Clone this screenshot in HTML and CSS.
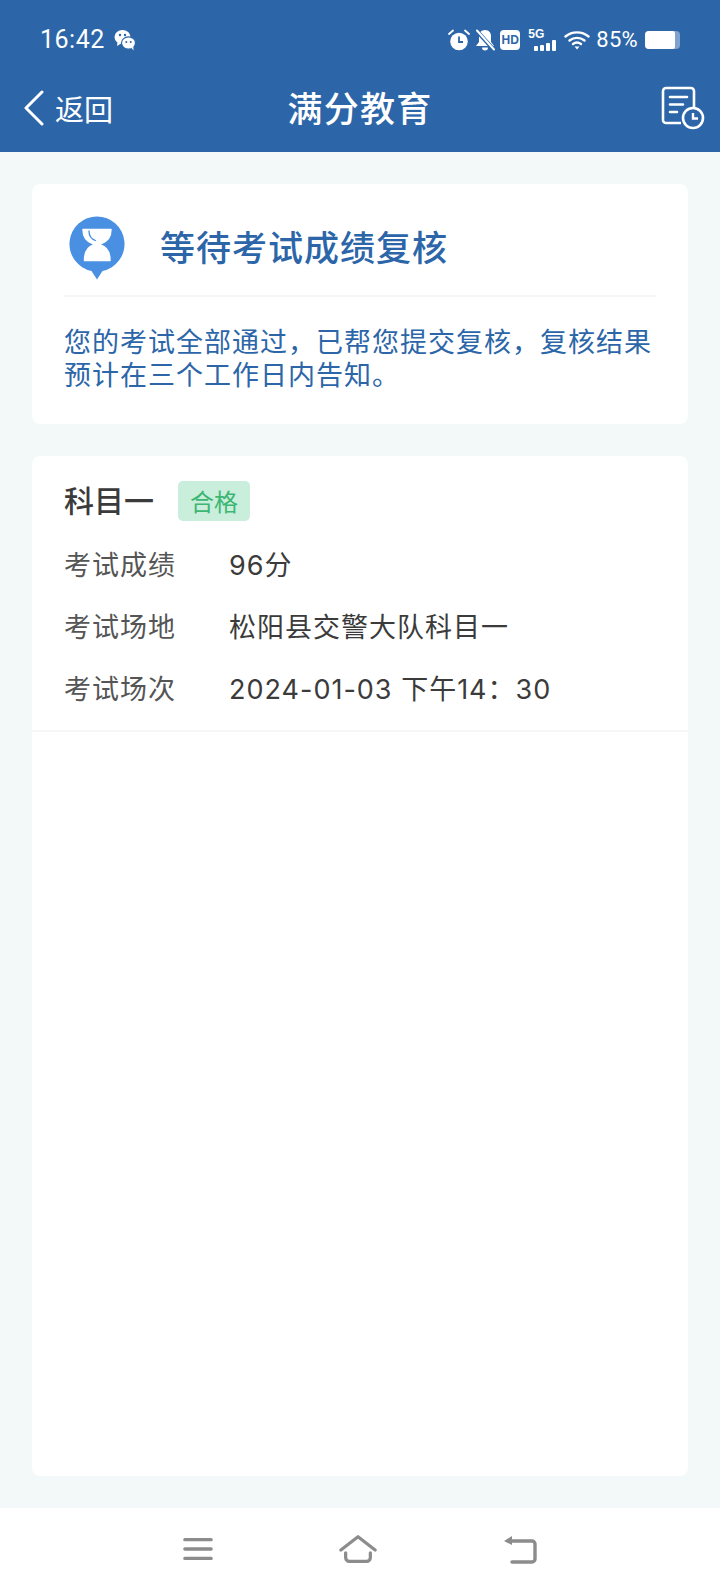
FILE: index.html
```html
<!DOCTYPE html>
<html lang="zh-CN">
<head>
    <meta charset="UTF-8">
    <meta name="viewport" content="width=device-width, initial-scale=1.0">
    <title>满分教育</title>
    <link rel="stylesheet" href="styles.css">
</head>
<body>
    <div class="page">
        <header class="top">
            <div class="status">
                <div class="status-left">
                    <span class="time">16:42</span>
                    <svg class="wechat" viewBox="0 0 22 22" width="22" height="22">
                        <ellipse cx="8.5" cy="8" rx="8" ry="7" fill="#fff"/>
                        <path d="M3.5 13l-.5 4 4-2.5z" fill="#fff"/>
                        <circle cx="6" cy="6" r="1.2" fill="#2c66a9"/>
                        <circle cx="11" cy="6" r="1.2" fill="#2c66a9"/>
                        <ellipse cx="14.5" cy="14" rx="7" ry="6.2" fill="#fff" stroke="#2c66a9" stroke-width="1.2"/>
                        <path d="M17.5 19l2 2.5-.2-4z" fill="#fff"/>
                        <circle cx="12.3" cy="13" r="1" fill="#2c66a9"/>
                        <circle cx="16.7" cy="13" r="1" fill="#2c66a9"/>
                    </svg>
                </div>
                <div class="status-right">
                    <svg viewBox="0 0 22 22" width="22" height="22">
                        <circle cx="11" cy="12.5" r="8.8" fill="#fff"/>
                        <path d="M11 7.5v5.5h4" fill="none" stroke="#2c66a9" stroke-width="1.8"/>
                        <path d="M1 5l4-3.5M21 5l-4-3.5" stroke="#fff" stroke-width="1.8" stroke-linecap="round"/>
                    </svg>
                    <svg viewBox="0 0 20 22" width="20" height="22">
                        <path d="M10 1c4 0 6 3 6 6v6l3 4H1l3-4V7c0-3 2-6 6-6z" fill="#fff"/>
                        <path d="M7 18.500h6c0 2-1 3-3 3s-3-1-3-3z" fill="#fff"/>
                        <path d="M1 1l18 20" stroke="#2c66a9" stroke-width="4"/>
                        <path d="M2 1.500l17 19" stroke="#fff" stroke-width="2" stroke-linecap="round"/>
                    </svg>
                    <span class="hd">HD</span>
                    <span class="signal">
                        <span class="net">5G</span>
                        <span class="bars"><i class="b1"></i><i class="b2"></i><i class="b3"></i><i class="b4"></i></span>
                    </span>
                    <svg viewBox="0 0 26 20" width="26" height="20">
                        <path d="M1.500 6.500C8 1 18 1 24.500 6.500" fill="none" stroke="#fff" stroke-width="2.400" stroke-linecap="round"/>
                        <path d="M5.500 10.500c4.500-3.500 10.500-3.500 15 0" fill="none" stroke="#fff" stroke-width="2.400" stroke-linecap="round"/>
                        <path d="M9 14c2.500-1.800 5.500-1.800 8 0" fill="none" stroke="#fff" stroke-width="2.400" stroke-linecap="round"/>
                        <path d="M10.500 16.500h5L13 19.500z" fill="#fff"/>
                    </svg>
                    <span class="percent">85%</span>
                    <span class="battery"><i></i></span>
                </div>
            </div>
            <nav class="bar">
                <a class="back">
                    <svg viewBox="0 0 22 36" width="22" height="36">
                        <path d="M19 2L3 18l16 16" fill="none" stroke="#fff" stroke-width="3" stroke-linecap="round" stroke-linejoin="round"/>
                    </svg>
                    <span>返回</span>
                </a>
                <h1>满分教育</h1>
                <svg class="record" viewBox="0 0 44 44" width="44" height="44">
                    <path d="M20 37H5a3 3 0 0 1-3-3V5a3 3 0 0 1 3-3h25a3 3 0 0 1 3 3v18" fill="none" stroke="#fff" stroke-width="2.600"/>
                    <path d="M9 11h17M9 18.500h13M9 26h7" stroke="#fff" stroke-width="2.600" stroke-linecap="round"/>
                    <circle cx="32" cy="32" r="10" fill="#2c66a9" stroke="#fff" stroke-width="2.600"/>
                    <path d="M32 27v5.500h5" fill="none" stroke="#fff" stroke-width="2.400"/>
                </svg>
            </nav>
        </header>

        <main class="content">
            <section class="card notice">
                <div class="notice-head">
                    <svg class="hourglass" viewBox="0 0 56 64" width="56" height="64">
                        <path d="M28 0.500a27.500 27.500 0 0 1 5.500 54.450L28 63.500l-5.500-8.550A27.500 27.500 0 0 1 28 0.500z" fill="#4a90e2"/>
                        <path d="M14 13.500h28c0 7.500-3 12-10.500 14.500v1c6.500 2 9.500 7.500 9.500 15.500H15.500c0-8 3-13.500 9-15.500v-1C17 25.500 14 21 14 13.500z" fill="#fff" stroke="#fff" stroke-width="1.500" stroke-linejoin="round"/>
                        <path d="M20 15c0 5 2 8 6.500 9.500" fill="none" stroke="#4a90e2" stroke-width="1.300" stroke-linecap="round"/>
                    </svg>
                    <h2>等待考试成绩复核</h2>
                </div>
                <p>您的考试全部通过，已帮您提交复核，复核结果预计在三个工作日内告知。</p>
            </section>

            <section class="card detail">
                <div class="subject">
                    <div class="subject-title">
                        <span class="subject-name">科目一</span>
                        <span class="tag">合格</span>
                    </div>
                    <div class="row"><span class="label">考试成绩</span><span>96分</span></div>
                    <div class="row"><span class="label">考试场地</span><span>松阳县交警大队科目一</span></div>
                    <div class="row"><span class="label">考试场次</span><span>2024-01-03 下午14：30</span></div>
                </div>
            </section>
        </main>

        <footer class="keys">
            <svg viewBox="0 0 32 26" width="30" height="26">
                <path d="M2 3h28M2 13h28M2 23h28" stroke="#8c8c8c" stroke-width="3.600" stroke-linecap="round"/>
            </svg>
            <svg viewBox="0 0 40 30" width="38" height="30">
                <path d="M2 16L20 2l18 14" fill="none" stroke="#8c8c8c" stroke-width="3.400" stroke-linecap="round" stroke-linejoin="round"/>
                <path d="M7 19v5a4 4 0 0 0 4 4h18a4 4 0 0 0 4-4v-5" fill="none" stroke="#8c8c8c" stroke-width="3.400" stroke-linecap="round"/>
            </svg>
            <svg viewBox="0 0 34 30" width="34" height="30">
                <path d="M5 7h24a3 3 0 0 1 3 3v15a3 3 0 0 1-3 3H9" fill="none" stroke="#8c8c8c" stroke-width="3.400" stroke-linecap="round"/>
                <path d="M1 7l8-5v9z" fill="#8c8c8c"/>
            </svg>
        </footer>
    </div>
</body>
</html>
```

FILE: styles.css
```css
* {
    box-sizing: border-box;
}

body {
    margin: 0;
    font-family: "Noto Sans", "Noto Sans CJK SC", sans-serif;
    color: #3b3b3b;
}

.page {
    display: flex;
    flex-direction: column;
    height: 1592px;
    background-color: #f3f8f9;
}

.top {
    height: 152px;
    background-color: #2c66a9;
    color: #fff;
}

.status {
    display: flex;
    justify-content: space-between;
    align-items: center;
    height: 80px;
    padding: 0 40px 1px 40px;
}

.status-left,
.status-right {
    display: flex;
    align-items: center;
}

.status-left {
    gap: 9px;
}

.status-right {
    gap: 6px;
}

.status-right svg:first-child {
    margin-right: -1px;
}

.time {
    font-family: Roboto, sans-serif;
    font-size: 25px;
    letter-spacing: 0.5px;
}

.hd {
    width: 20px;
    height: 20px;
    margin-left: -1px;
    border-radius: 4px;
    background-color: #fff;
    color: #2c66a9;
    font: 700 12px/20px "Liberation Sans", sans-serif;
    text-align: center;
}

.signal {
    position: relative;
    width: 30px;
    height: 22px;
    margin-left: 2px;
}

.net {
    position: absolute;
    left: 0;
    top: -2px;
    font: 700 12px/14px "Liberation Sans", sans-serif;
}

.bars {
    position: absolute;
    left: 6px;
    bottom: 0;
    display: flex;
    align-items: flex-end;
    gap: 2.500px;
}

.bars i {
    display: block;
    width: 3.500px;
    background-color: #fff;
    border-radius: 1px;
}

.b1 { height: 5px; }
.b2 { height: 6px; }
.b3 { height: 8px; }
.b4 { height: 11px; }

.percent {
    font-family: Roboto, sans-serif;
    font-size: 22px;
    letter-spacing: 0.3px;
}

.battery {
    display: block;
    width: 35px;
    height: 18px;
    margin-left: 1px;
    border-radius: 4px;
    background-color: #7fa3cc;
}

.battery i {
    display: block;
    width: 30px;
    height: 18px;
    border-radius: 4px 2px 2px 4px;
    background-color: #fff;
}

.bar {
    position: relative;
    display: flex;
    justify-content: space-between;
    align-items: center;
    height: 72px;
    padding: 0 15px 16px 23px;
}

.back {
    display: flex;
    align-items: center;
    gap: 10px;
    font-size: 29px;
}

.bar h1 {
    position: absolute;
    left: 0;
    right: 0;
    top: 4px;
    margin: 0;
    font-size: 35px;
    font-weight: 500;
    line-height: 50px;
    letter-spacing: 1.300px;
    text-align: center;
}

.content {
    flex: 1;
    display: flex;
    flex-direction: column;
    gap: 32px;
    padding: 32px 32px;
}

.card {
    border-radius: 8px;
    background-color: #fff;
}

.notice {
    height: 240px;
    padding: 0 32px;
}

.notice-head {
    display: flex;
    align-items: center;
    gap: 35px;
    height: 113px;
    padding: 16px 0 0 5px;
    border-bottom: 2px solid #f4f5f7;
}

.notice h2 {
    margin: 0;
    color: #2c66a9;
    font-size: 35px;
    font-weight: 500;
    line-height: 50px;
    letter-spacing: 1px;
}

.notice p {
    margin: 28px 0 0;
    color: #2c66a9;
    font-size: 27px;
    line-height: 33px;
    letter-spacing: 1px;
}

.detail {
    flex: 1;
}

.subject {
    height: 276px;
    padding: 25px 32px 0;
    border-bottom: 2px solid #f5f6f8;
}

.subject-title {
    display: flex;
    align-items: center;
    gap: 24px;
    height: 40px;
}

.subject-name {
    font-size: 30px;
    font-weight: 500;
    line-height: 40px;
}

.tag {
    width: 72px;
    height: 40px;
    border-radius: 5px;
    background-color: #c9eedb;
    color: #3db673;
    font-size: 24px;
    line-height: 41px;
    text-align: center;
}

.row {
    display: flex;
    align-items: center;
    height: 62px;
    font-family: Inter, "Noto Sans CJK SC", sans-serif;
    font-size: 27px;
    letter-spacing: 1px;
}

.subject-title + .row {
    margin-top: 11px;
}

.label {
    width: 165px;
    flex-shrink: 0;
    color: #555;
}

.keys {
    display: flex;
    justify-content: center;
    align-items: center;
    gap: 126px;
    height: 84px;
    padding-bottom: 2px;
    background-color: #fff;
}
```
